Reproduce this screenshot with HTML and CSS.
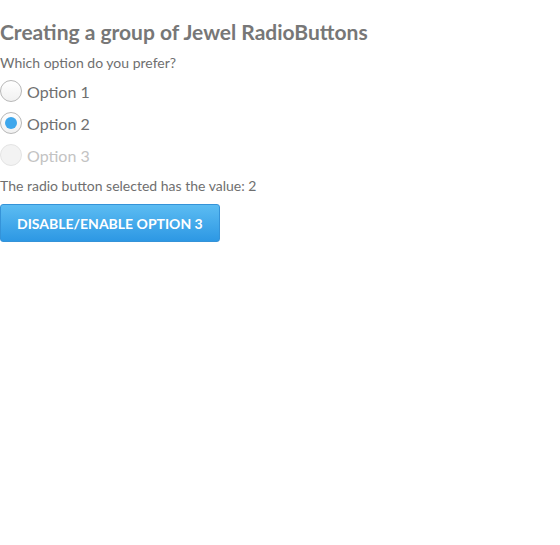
FILE: index.html
```html
<!DOCTYPE html>
<html>
  <head>
    <title>Jewel RadioButtons</title>
    <link rel="stylesheet" href="styles.css">
  </head>
  <body>
    <h2 class="title">Creating a group of Jewel RadioButtons</h2>
    <div class="question">Which option do you prefer?</div>

    <div class="radio-group">
      <label class="radio">
        <input type="radio" name="options" value="1">
        <span class="circle"></span>
        <span class="radio-label">Option 1</span>
      </label>
      <label class="radio">
        <input type="radio" name="options" value="2" checked>
        <span class="circle"></span>
        <span class="radio-label">Option 2</span>
      </label>
      <label class="radio disabled">
        <input type="radio" name="options" value="3" disabled>
        <span class="circle"></span>
        <span class="radio-label">Option 3</span>
      </label>
    </div>

    <div class="result">The radio button selected has the value: 2</div>

    <button class="toggle-button">DISABLE/ENABLE OPTION 3</button>
  </body>
</html>
```

FILE: styles.css
```css
body {
  margin: 0;
  font-family: Lato, "Open Sans", sans-serif;
  color: #6f6f6f;
  background: #fff;
}

.title {
  margin: 18px 0 8px;
  font-size: 21px;
  font-weight: bold;
  line-height: 28px;
  color: #777;
}

.question {
  font-size: 14px;
  line-height: 18px;
}

.radio-group {
  display: flex;
  flex-direction: column;
  margin-top: 3px;
}

.radio {
  display: flex;
  align-items: center;
  gap: 5px;
  height: 32px;
  cursor: pointer;
}

.radio input {
  display: none;
}

.circle {
  box-sizing: border-box;
  width: 22px;
  height: 22px;
  border: 1px solid #b8b8b8;
  border-radius: 50%;
  background: linear-gradient(#ffffff, #f1f1f1);
  display: flex;
  align-items: center;
  justify-content: center;
}

.radio input:checked + .circle::after {
  content: "";
  width: 12px;
  height: 12px;
  border-radius: 50%;
  background: #3ea7ec;
}

.radio-label {
  font-size: 16px;
  color: #707070;
}

.radio.disabled .circle {
  border-color: #e4e4e4;
  background: #f3f3f3;
}

.radio.disabled .radio-label {
  color: #c3c3c3;
}

.result {
  margin-top: 6px;
  font-size: 14px;
  line-height: 18px;
}

.toggle-button {
  display: block;
  margin-top: 9px;
  padding: 0 16px;
  height: 38px;
  border: 1px solid #3593d8;
  border-radius: 3px;
  background: linear-gradient(#5cbcf2, #2d98e4);
  color: #fff;
  font-family: Lato, sans-serif;
  font-size: 14px;
  font-weight: bold;
  cursor: pointer;
}
```
